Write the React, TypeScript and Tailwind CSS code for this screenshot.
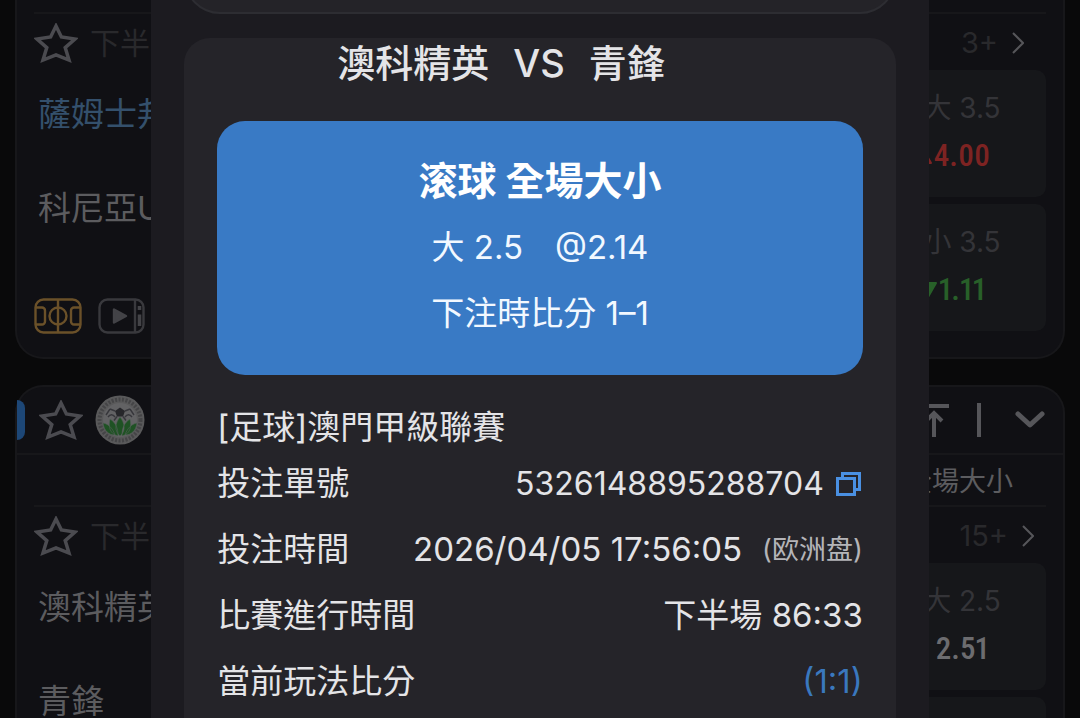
import { useState, type ReactNode } from 'react'
import clsx from 'clsx'

type Odd = { label: string; value: string; trend?: 'up' | 'down' }

type Match = {
  home: string
  away: string
  more: string
  homeActive?: boolean
  media?: boolean
  odds: Odd[]
}

const MATCH_TOP: Match = {
  home: '薩姆士邦',
  away: '科尼亞U',
  more: '3+',
  homeActive: true,
  media: true,
  odds: [
    { label: '大 3.5', value: '4.00', trend: 'up' },
    { label: '小 3.5', value: '1.11', trend: 'down' },
  ],
}

const MATCH_BOTTOM: Match = {
  home: '澳科精英',
  away: '青鋒',
  more: '15+',
  odds: [
    { label: '大 2.5', value: '2.51' },
    { label: '', value: '' },
  ],
}

function StarButton() {
  const [on, setOn] = useState(false)
  return (
    <button type="button" aria-label="收藏" aria-pressed={on} onClick={() => setOn(!on)}>
      <svg width="44" height="40" viewBox="0 0 44 40" fill={on ? '#4b4b50' : 'none'}>
        <path
          d="M22 3 27.4 14 41 16 31.2 24.6 35 37 22 31.8 9 37 12.8 24.6 3 16 16.6 14Z"
          stroke="#4b4b50"
          strokeWidth="3.5"
        />
      </svg>
    </button>
  )
}

function PitchIcon() {
  return (
    <svg width="48" height="36" viewBox="0 0 48 36" fill="none" stroke="#6b5129" strokeWidth="2.4">
      <rect x="1.5" y="1.5" width="45" height="33" rx="8" />
      <path d="M24 1.5v33M1.5 9.5H8a3 3 0 0 1 3 3v11a3 3 0 0 1-3 3H1.5M46.5 9.5H40a3 3 0 0 0-3 3v11a3 3 0 0 0 3 3h6.5" />
      <circle cx="24" cy="18" r="8.5" />
    </svg>
  )
}

function VideoIcon() {
  return (
    <svg width="48" height="36" viewBox="0 0 48 36" fill="none" stroke="#39393d" strokeWidth="2.4">
      <rect x="1.5" y="1.5" width="44" height="33" rx="8" />
      <path d="M37 1.5v33" />
      <path d="M16 11.5v13l12-6.5z" fill="#434347" stroke="#434347" strokeLinejoin="round" />
      <path d="M41.5 8v4M41.5 16.5V28" stroke="#434347" strokeWidth="3.5" />
    </svg>
  )
}

function ClubBadge() {
  return (
    <svg width="50" height="50" viewBox="0 0 50 50">
      <circle cx="25" cy="25" r="24.5" fill="#59595a" />
      <circle cx="25" cy="25" r="20.5" fill="none" stroke="#454547" strokeWidth="4" strokeDasharray="2 1.5" />
      <circle cx="25" cy="25" r="17" fill="#626264" />
      <path d="M25 12.5 30 16 28 21.5H22L20 16Z" fill="#26262a" />
      <path
        d="M11 20l4-6M39 20l-4-6M13 22c2-3 5-3 7 0M30 22c2-3 5-3 7 0M20 16l-5-2M30 16l5-2M22 21.5l-3 4M28 21.5l3 4"
        stroke="#36363b"
        strokeWidth="1.4"
        fill="none"
      />
      <path
        d="M20 40c-6 0-11-4-12-12 6 1 10 6 12 12ZM30 40c6 0 11-4 12-12-6 1-10 6-12 12ZM23 41c-8-2-10-9-8-17 6 4 8 9 8 17ZM27 41c8-2 10-9 8-17-6 4-8 9-8 17ZM25 41C19 36 20 28 25 22c5 6 6 14 0 19Z"
        fill="#1f5224"
        stroke="#55605a"
        strokeWidth=".6"
      />
    </svg>
  )
}

function OddBox({ odd }: { odd: Odd }) {
  return (
    <button
      type="button"
      className="flex h-[127px] flex-col items-center rounded-[10px] bg-[#16171a] pt-5"
    >
      <span className="text-[28px] leading-9 text-[#343438]">{odd.label}</span>
      <span
        className={clsx(
          "relative mt-2.5 font-['Liberation_Sans_Narrow','Roboto_Condensed',Roboto,sans-serif] text-[31px] leading-10 font-medium proportional-nums",
          odd.trend === 'up' && 'text-[#7d2322]',
          odd.trend === 'down' && 'text-[#286029]',
          !odd.trend && 'text-[#6c6c6f]',
        )}
      >
        {odd.trend && (
          <svg
            width="18"
            height="16"
            viewBox="0 0 18 16"
            fill="currentColor"
            stroke="currentColor"
            strokeWidth="2"
            strokeLinejoin="round"
            className="absolute top-3 right-full mr-0.5"
          >
            <path d={odd.trend === 'up' ? 'M9 1 17 15H1Z' : 'M1 1H17L9 15Z'} />
          </svg>
        )}
        {odd.value}
      </span>
    </button>
  )
}

function MatchBlock({ match }: { match: Match }) {
  return (
    <article className="mx-[17px] border-t-2 border-[#17171a]">
      <header className={clsx('flex h-14 items-center gap-3 pt-0.5', match.media ? 'pr-[22px]' : 'pr-3')}>
        <StarButton />
        <span className="text-[30px] text-[#29292c]">下半場</span>
        <a href="#more" className="ml-auto flex items-center gap-3.5 text-[29px] text-[#29292c]">
          {match.more}
          <svg width="12" height="22" viewBox="0 0 12 22" fill="none" stroke="#56565a" strokeWidth="2">
            <path d="M1 1 11 11 1 21" />
          </svg>
        </a>
      </header>
      <div className="grid grid-cols-[1fr_168px] items-start">
        <div className="pl-1 text-[33px] leading-none text-[#5c5c5f]">
          <p className={clsx('flex h-[88px] items-center', match.homeActive && 'text-[#34506c]')}>{match.home}</p>
          <p className="mt-1.5 flex h-[88px] items-center">{match.away}</p>
        </div>
        <div className="row-span-2 grid gap-[7px]">
          {match.odds.map((odd, i) => (
            <OddBox key={i} odd={odd} />
          ))}
        </div>
        {match.media && (
          <div className="flex gap-4 pt-[46px]">
            <button type="button" aria-label="動畫直播">
              <PitchIcon />
            </button>
            <button type="button" aria-label="視頻直播">
              <VideoIcon />
            </button>
          </div>
        )}
      </div>
    </article>
  )
}

function LeagueHeader() {
  return (
    <header className="flex h-[68px] items-center border-b-2 border-[#17171a] pr-[18px]">
      <span className="h-10 w-2 rounded-r-xl bg-[#1d4777]" />
      <div className="ml-3.5 flex items-center gap-3">
        <StarButton />
        <ClubBadge />
      </div>
      <div className="ml-auto flex items-center gap-7">
        <button type="button" aria-label="置頂">
          <svg width="30" height="34" viewBox="0 0 30 34" fill="none" stroke="#56565a" strokeWidth="4">
            <path d="M0 3H30M15 34V10M7 18l8-8 8 8" />
          </svg>
        </button>
        <span className="h-[34px] w-1 bg-[#56565a]" />
        <button type="button" aria-label="收起" className="ml-1.5">
          <svg width="30" height="18" viewBox="0 0 30 18" fill="none" stroke="#56565a" strokeWidth="5">
            <path d="M3 3 15 14 27 3" strokeLinecap="round" strokeLinejoin="round" />
          </svg>
        </button>
      </div>
    </header>
  )
}

function Row({ label, children }: { label: string; children: ReactNode }) {
  return (
    <div className="flex h-[66px] items-center justify-between">
      <dt>{label}</dt>
      <dd className="flex items-center">{children}</dd>
    </div>
  )
}

function BetDetail() {
  return (
    <section className="mt-6 flex-1 rounded-t-[26px] bg-[#252429] px-[33px] text-[33px] text-[#e4e4e7]">
      <h2 className="flex h-[83px] justify-center gap-6 pr-[78px] text-[38px] leading-[50px] font-medium">
        <span>澳科精英</span>
        <span>VS</span>
        <span>青鋒</span>
      </h2>
      <div className="flex h-[254px] flex-col items-center rounded-[28px] bg-[#397ac5] pt-[27px] text-[#f2f8ff]">
        <h3 className="text-[39px] leading-[66px] font-bold text-white">滚球 全場大小</h3>
        <p className="flex gap-8 leading-[66px]">
          <span>大 2.5</span>
          <span>@2.14</span>
        </p>
        <p className="leading-[66px]">下注時比分 1–1</p>
      </div>
      <p className="pt-7 leading-[48px]">[足球]澳門甲級聯賽</p>
      <dl>
        <Row label="投注單號">
          <span className="text-[32px]">5326148895288704</span>
          <button type="button" aria-label="複製" className="mr-0.5 ml-3">
            <svg width="25" height="24" viewBox="0 0 25 24" fill="none" stroke="#4a90e2" strokeWidth="3">
              <path d="M1.5 6.5H18.5V22.5H1.5ZM6.5 6.5V1.5H23.5V17.5H18.5" />
            </svg>
          </button>
        </Row>
        <Row label="投注時間">
          2026/04/05 17:56:05
          <span className="ml-5 text-[27px] text-[#b4b4b8]">(欧洲盘)</span>
        </Row>
        <Row label="比賽進行時間">下半場 86:33</Row>
        <Row label="當前玩法比分">
          <span className="text-[#3a78be]">(1:1)</span>
        </Row>
      </dl>
    </section>
  )
}

export default function App() {
  return (
    <div className="h-screen overflow-hidden bg-[#09090a] font-[Inter,'Noto_Sans_CJK_TC',sans-serif]">
      <main className="px-[15px]">
        <section className="rounded-b-[28px] border-2 border-t-0 border-[#17171a] bg-[#101014] pt-3 pb-[23px]">
          <MatchBlock match={MATCH_TOP} />
        </section>
        <section className="mt-[26px] rounded-t-[28px] border-2 border-b-0 border-[#17171a] bg-[#101014]">
          <LeagueHeader />
          <p className="pt-1 pr-[50px] text-right text-[27px] leading-[46px] text-[#5c5c5f]">全場大小</p>
          <MatchBlock match={MATCH_BOTTOM} />
        </section>
      </main>
      <div className="fixed inset-0 flex justify-center">
        <div role="dialog" aria-label="投注詳情" className="flex w-[72%] flex-col overflow-hidden bg-[#1c1b20] px-[33px]">
          {/* tail of the previous panel, scrolled out at the top */}
          <div className="-mt-20 h-[94px] shrink-0 rounded-[36px] border-2 border-[#2d2d32] bg-[#242328]" />
          <BetDetail />
        </div>
      </div>
    </div>
  )
}
